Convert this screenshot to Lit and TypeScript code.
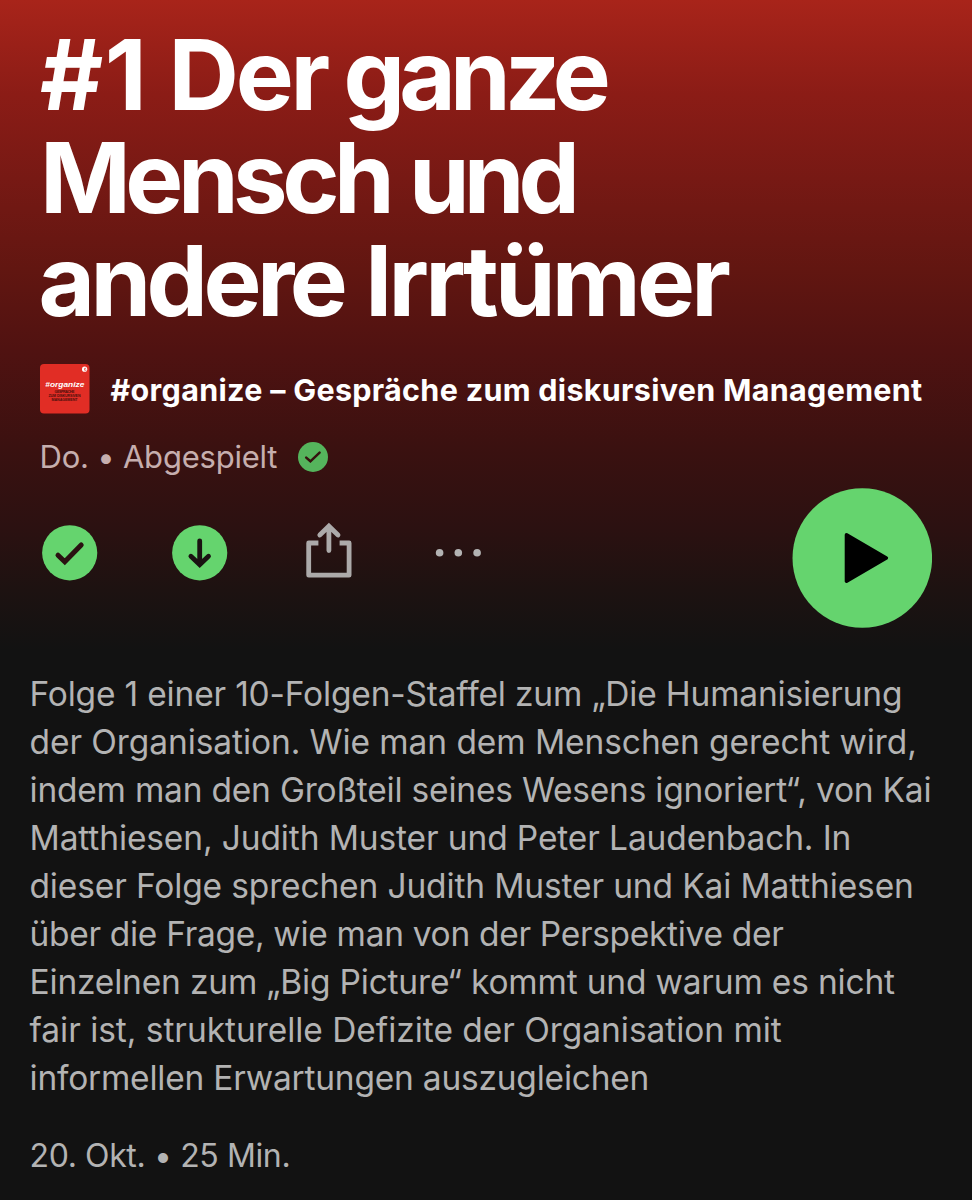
import { LitElement, html, css } from "lit";
import { customElement } from "lit/decorators.js";

type Word = { text: string; width: number; tracking: number };
type Line = { text: string; tracking: number };

const TITLE: { indent: number; words: Word[] }[] = [
  {
    indent: 40,
    words: [
      { text: "#1", width: 128.5, tracking: 1.5 },
      { text: "Der", width: 175, tracking: -3.2 },
      { text: "ganze", width: 270, tracking: -5.9 },
    ],
  },
  {
    indent: 40,
    words: [
      { text: "Mensch", width: 369, tracking: -5.5 },
      { text: "und", width: 180, tracking: -6 },
    ],
  },
  {
    indent: 38.5,
    words: [
      { text: "andere", width: 326.5, tracking: -4.6 },
      { text: "Irrtümer", width: 380, tracking: -3.8 },
    ],
  },
];

const DESCRIPTION: Line[] = [
  { text: "Folge 1 einer 10-Folgen-Staffel zum „Die Humanisierung", tracking: -0.18 },
  { text: "der Organisation. Wie man dem Menschen gerecht wird,", tracking: -0.08 },
  { text: "indem man den Großteil seines Wesens ignoriert“, von Kai", tracking: -0.21 },
  { text: "Matthiesen, Judith Muster und Peter Laudenbach. In", tracking: -0.12 },
  { text: "dieser Folge sprechen Judith Muster und Kai Matthiesen", tracking: -0.14 },
  { text: "über die Frage, wie man von der Perspektive der", tracking: -0.31 },
  { text: "Einzelnen zum „Big Picture“ kommt und warum es nicht", tracking: -0.18 },
  { text: "fair ist, strukturelle Defizite der Organisation mit", tracking: -0.04 },
  { text: "informellen Erwartungen auszugleichen", tracking: -0.22 },
];

@customElement("app-root")
export class AppRoot extends LitElement {
  static styles = css`
    :host {
      display: block;
      box-sizing: border-box;
      width: 972px;
      height: 1200px;
      overflow: hidden;
      font-family: Inter, "Liberation Sans", sans-serif;
      color: #b3b3b3;
      background: #121212
        linear-gradient(
          #a8241a 0px,
          #9a2018 45px,
          #8b1c16 95px,
          #771914 179px,
          #621611 268px,
          #501211 350px,
          #3b1110 446px,
          #2b1111 530px,
          #1d1211 590px,
          #121212 650px
        )
        no-repeat 0 0 / 100% 650px;
    }
    .title {
      margin: 0;
      padding-top: 24px;
      height: 309px;
      font-size: 97.5px;
      line-height: 103px;
      font-weight: 670;
      color: #fff;
    }
    .line {
      display: flex;
      height: 103px;
      white-space: nowrap;
    }
    .word {
      flex: none;
    }
    .show {
      display: flex;
      align-items: center;
      gap: 20.5px;
      height: 50px;
      margin: 31px 0 0 40px;
    }
    .cover {
      flex: none;
      display: block;
      width: 50px;
      height: 50px;
    }
    .name {
      padding-top: 1px;
      font-size: 30.5px;
      font-weight: 650;
      letter-spacing: 0.3px;
      line-height: 50px;
      color: #fff;
      white-space: nowrap;
    }
    .status {
      display: flex;
      align-items: center;
      height: 40px;
      margin: 22.5px 0 0 39.5px;
      font-size: 31px;
      letter-spacing: -0.22px;
      line-height: 40px;
      color: #c6aeae;
      white-space: nowrap;
    }
    .played {
      margin-left: 20.3px;
      width: 30px;
      height: 30px;
    }
    .actions {
      display: flex;
      align-items: center;
      height: 140px;
      margin: 11.5px 40px 0 42px;
    }
    .buttons {
      display: flex;
      align-items: center;
      flex: 1;
      height: 56px;
      margin-bottom: 10px;
    }
    .icon {
      flex: none;
      display: block;
      width: 56px;
      height: 56px;
      margin-right: 73.7px;
      overflow: visible;
    }
    .play {
      flex: none;
      display: block;
      width: 140px;
      height: 140px;
    }
    .description {
      margin: 42px 0 0 29.5px;
      font-size: 33.5px;
      line-height: 48px;
    }
    .row {
      height: 48px;
      white-space: nowrap;
    }
    .date {
      margin: 30px 0 0 29.5px;
      font-size: 32px;
      line-height: 48px;
      letter-spacing: -0.38px;
      white-space: nowrap;
    }
  `;

  render() {
    return html`
      <h1 class="title">
        ${TITLE.map(
          (line) => html`<div class="line" style="padding-left:${line.indent}px">
            ${line.words.map(
              (w) => html`<span class="word" style="width:${w.width}px;letter-spacing:${w.tracking}px">${w.text}</span>`
            )}
          </div>`
        )}
      </h1>

      <div class="show">
        <svg class="cover" viewBox="0 0 50 50">
          <rect width="49.5" height="49.5" rx="4" fill="#e12d25" />
          <circle cx="44.6" cy="5.2" r="2.6" fill="#fff" />
          <path d="M46 4.3 h-1.4 v1.9 h1.8" fill="none" stroke="#e12d25" stroke-width=".7" />
          <text x="24.8" y="22.6" text-anchor="middle" textLength="39" lengthAdjust="spacingAndGlyphs"
            font-family="Liberation Sans" font-weight="700" font-style="italic" font-size="7.6" fill="#fff">#organize</text>
          <g text-anchor="middle" font-family="Liberation Sans" font-weight="700" font-size="3.6" fill="#4a0f0c">
            <text x="24.5" y="29.2" textLength="20">GESPRÄCHE</text>
            <text x="24.5" y="33" textLength="32">ZUM DISKURSIVEN</text>
            <text x="24.5" y="36.8" textLength="26">MANAGEMENT</text>
          </g>
        </svg>
        <span class="name">#organize – Gespräche zum diskursiven Management</span>
      </div>

      <div class="status">
        <span>Do. • Abgespielt</span>
        <svg class="played" viewBox="0 0 30 30">
          <circle cx="15" cy="15" r="15" fill="#55b45c" />
          <path d="M8.2 15.6 L12.4 19.3 L21.6 10.6" fill="none" stroke="#35110f" stroke-width="2.5" stroke-linecap="round" />
        </svg>
      </div>

      <div class="actions">
        <div class="buttons">
          <svg class="icon" viewBox="0 0 56 56">
            <circle cx="27.7" cy="27.8" r="27.6" fill="#65d46e" />
            <path d="M16 30.2 L22.8 36.8 L39.2 20" fill="none" stroke="#2a1111" stroke-width="5" stroke-linecap="round" />
          </svg>
          <svg class="icon" viewBox="0 0 56 56">
            <circle cx="27.7" cy="27.8" r="27.6" fill="#65d46e" />
            <path d="M27.7 15.8 V39 M18.9 31.2 L27.7 39.6 L36.5 31.2" fill="none" stroke="#1a1212" stroke-width="4.8" stroke-linecap="round" />
          </svg>
          <svg class="icon" viewBox="0 0 56 56">
            <g fill="none" stroke="#acaaaa" stroke-width="4.8">
              <path d="M17.4 18 H7.7 V50.2 H48.1 V18 H38.6" stroke-linejoin="round" />
              <path d="M27.9 25.6 V2.4 M18.8 10 L27.9 1.2 L37 10" stroke-linecap="round" />
            </g>
          </svg>
          <svg class="icon" viewBox="0 0 56 56">
            <g fill="#b3b3b3">
              <circle cx="8.6" cy="27.8" r="3.8" />
              <circle cx="27.3" cy="27.8" r="3.8" />
              <circle cx="46.1" cy="27.8" r="3.8" />
            </g>
          </svg>
        </div>
        <svg class="play" viewBox="0 0 140 140">
          <circle cx="70.3" cy="70" r="69.8" fill="#65d46e" />
          <path d="M54.5 46.8 L94.3 70 L54.5 93.2 Z" fill="#000" stroke="#000" stroke-width="3.6" stroke-linejoin="round" />
        </svg>
      </div>

      <div class="description">
        ${DESCRIPTION.map(
          (l) => html`<div class="row" style="letter-spacing:${l.tracking}px">${l.text}</div>`
        )}
      </div>
      <div class="date">20. Okt. • 25 Min.</div>
    `;
  }
}
